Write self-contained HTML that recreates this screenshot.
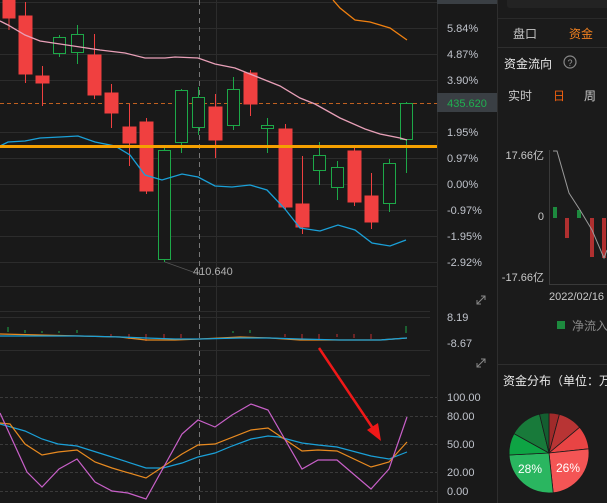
<!DOCTYPE html>
<html><head><meta charset="utf-8"><style>
html,body{margin:0;padding:0;background:#191919;width:607px;height:503px;overflow:hidden}
svg{display:block}
text{font-family:"Liberation Sans","Noto Sans CJK SC",sans-serif}
</style></head><body>
<svg width="607" height="503" viewBox="0 0 607 503" xmlns="http://www.w3.org/2000/svg">
<rect width="607" height="503" fill="#191919"/>
<!-- right panel -->
<rect x="497" y="0" width="110" height="503" fill="#1b1b1b"/>
<line x1="497.5" y1="0" x2="497.5" y2="503" stroke="#2e2e2e"/>
<rect x="507" y="-6" width="104" height="14" rx="3" fill="#232323"/>
<line x1="498" y1="18.5" x2="607" y2="18.5" stroke="#2a2a2a"/>
<line x1="498" y1="47.5" x2="607" y2="47.5" stroke="#2e2e2e"/>
<text x="513" y="38" font-size="12" fill="#c8c8c8">盘口</text>
<text x="569" y="38" font-size="12" fill="#f08020">资金</text>
<text x="504" y="68" font-size="12" fill="#e8e8e8">资金流向</text>
<circle cx="570" cy="62" r="6" fill="none" stroke="#888" stroke-width="1.2"/>
<text x="570" y="66" font-size="9" fill="#999" text-anchor="middle">?</text>
<text x="508" y="100" font-size="12" fill="#c8c8c8">实时</text>
<text x="553" y="100" font-size="12" fill="#f06010">日</text>
<text x="584" y="100" font-size="12" fill="#c8c8c8">周</text>
<text x="544" y="159" font-size="11" fill="#c8c8c8" text-anchor="end">17.66亿</text>
<text x="544" y="220" font-size="11" fill="#c8c8c8" text-anchor="end">0</text>
<text x="544" y="281" font-size="11" fill="#c8c8c8" text-anchor="end">-17.66亿</text>
<line x1="549.5" y1="150" x2="549.5" y2="284" stroke="#3a3a3a"/>
<line x1="549" y1="284.5" x2="607" y2="284.5" stroke="#3a3a3a"/>
<rect x="553" y="207" width="4" height="11" fill="#1d8a3e"/>
<rect x="565" y="218" width="4" height="20" fill="#b03030"/>
<rect x="577" y="210" width="4" height="8" fill="#1d8a3e"/>
<rect x="590" y="218" width="4" height="39" fill="#b03030"/>
<rect x="602" y="218" width="4" height="40" fill="#b03030"/>
<polyline points="553,151 557,151 569,193 580,210 592,230 604,258 607,250" fill="none" stroke="#9a9a9a" stroke-width="1"/>
<text x="549" y="300" font-size="11" fill="#c8c8c8">2022/02/16</text>
<rect x="557" y="321" width="8" height="8" fill="#1d8a3e"/>
<text x="572" y="330" font-size="12" fill="#888">净流入</text>
<line x1="498" y1="364.5" x2="607" y2="364.5" stroke="#2e2e2e"/>
<text x="503" y="385" font-size="12" fill="#e8e8e8">资金分布（单位：万</text>
<!-- pie -->
<g transform="translate(549,453)" stroke="#1b1b1b" stroke-width="0.8">
<path d="M0,0 L0,-40 A40,40 0 0,1 10.4,-38.6 Z" fill="#a02a2a"/>
<path d="M0,0 L10.4,-38.6 A40,40 0 0,1 30.6,-25.7 Z" fill="#b83434"/>
<path d="M0,0 L30.6,-25.7 A40,40 0 0,1 39.8,-4.2 Z" fill="#e84444"/>
<path d="M0,0 L39.8,-4.2 A40,40 0 0,1 4.2,39.8 Z" fill="#f45555"/>
<path d="M0,0 L4.2,39.8 A40,40 0 0,1 -39.9,2 Z" fill="#2ab660"/>
<path d="M0,0 L-39.9,2 A40,40 0 0,1 -35,-19.4 Z" fill="#0ea444"/>
<path d="M0,0 L-35,-19.4 A40,40 0 0,1 -9.5,-38.9 Z" fill="#187a3a"/>
<path d="M0,0 L-9.5,-38.9 A40,40 0 0,1 0,-40 Z" fill="#145e30"/>
</g>
<text x="568" y="472" font-size="12" fill="#fff" text-anchor="middle">26%</text>
<text x="530" y="473" font-size="12" fill="#fff" text-anchor="middle">28%</text>

<!-- main chart grid -->
<g stroke="#2c2c2c" stroke-width="1">
<line x1="0" y1="2.5" x2="437" y2="2.5"/><line x1="0" y1="28.5" x2="437" y2="28.5"/>
<line x1="0" y1="54.5" x2="437" y2="54.5"/><line x1="0" y1="80.5" x2="437" y2="80.5"/>
<line x1="0" y1="132.5" x2="437" y2="132.5"/><line x1="0" y1="158.5" x2="437" y2="158.5"/>
<line x1="0" y1="184.5" x2="437" y2="184.5"/><line x1="0" y1="210.5" x2="437" y2="210.5"/>
<line x1="0" y1="236.5" x2="437" y2="236.5"/><line x1="0" y1="262.5" x2="437" y2="262.5"/>
<line x1="0" y1="286.5" x2="437" y2="286.5"/>
<line x1="437.5" y1="0" x2="437.5" y2="503"/>
<line x1="216.5" y1="0" x2="216.5" y2="503"/>
<line x1="0" y1="311.5" x2="430" y2="311.5"/><line x1="0" y1="317.5" x2="430" y2="317.5"/>
<line x1="0" y1="350.5" x2="430" y2="350.5"/>
<line x1="0" y1="375.5" x2="430" y2="375.5"/>
</g>
<g stroke="#3a3a3a" stroke-dasharray="3,2">
<line x1="0" y1="397.5" x2="437" y2="397.5"/><line x1="0" y1="416.5" x2="437" y2="416.5"/>
<line x1="0" y1="444.5" x2="437" y2="444.5"/><line x1="0" y1="472.5" x2="437" y2="472.5"/>
<line x1="0" y1="491.5" x2="437" y2="491.5"/>
</g>
<line x1="199.5" y1="0" x2="199.5" y2="503" stroke="#777" stroke-dasharray="5,4"/>
<line x1="0" y1="103.5" x2="437" y2="103.5" stroke="#c06020" stroke-dasharray="4,3"/>

<!-- candles -->
<g stroke-width="1">
<g fill="#f04040" stroke="#f04040">
<line x1="9" y1="0" x2="9" y2="30"/><rect x="3" y="0" width="12" height="18"/>
<line x1="25.5" y1="2" x2="25.5" y2="83"/><rect x="19" y="16" width="13" height="58"/>
<line x1="42.5" y1="66" x2="42.5" y2="106"/><rect x="36" y="76" width="13" height="7"/>
<line x1="94.5" y1="34" x2="94.5" y2="99"/><rect x="88" y="55" width="13" height="40"/>
<line x1="111.5" y1="84" x2="111.5" y2="128"/><rect x="105" y="93" width="13" height="20"/>
<line x1="129.5" y1="104" x2="129.5" y2="166"/><rect x="123" y="127" width="13" height="16"/>
<line x1="146.5" y1="118" x2="146.5" y2="194"/><rect x="140" y="122" width="13" height="69"/>
<line x1="215.5" y1="94" x2="215.5" y2="158"/><rect x="209" y="107" width="13" height="33"/>
<line x1="250.5" y1="70" x2="250.5" y2="116"/><rect x="244" y="73" width="13" height="31"/>
<line x1="285.5" y1="124" x2="285.5" y2="210"/><rect x="279" y="129" width="13" height="78"/>
<line x1="302.5" y1="156" x2="302.5" y2="234"/><rect x="296" y="204" width="13" height="23"/>
<line x1="354.5" y1="148" x2="354.5" y2="206"/><rect x="348" y="151" width="13" height="51"/>
<line x1="371.5" y1="173" x2="371.5" y2="229"/><rect x="365" y="196" width="13" height="26"/>
</g>
<g fill="#191919" stroke="#1da848">
<line x1="59.5" y1="35" x2="59.5" y2="57"/><rect x="53.5" y="37.5" width="12" height="16"/>
<line x1="77.5" y1="25" x2="77.5" y2="64"/><rect x="71.5" y="34.5" width="12" height="18"/>
<line x1="164.5" y1="147" x2="164.5" y2="262"/><rect x="158.5" y="150.5" width="12" height="109"/>
<line x1="181.5" y1="89" x2="181.5" y2="153"/><rect x="175.5" y="90.5" width="12" height="52"/>
<line x1="198.5" y1="87" x2="198.5" y2="135"/><rect x="192.5" y="97.5" width="12" height="30"/>
<line x1="233.5" y1="77" x2="233.5" y2="130"/><rect x="227.5" y="89.5" width="12" height="36"/>
<line x1="267.5" y1="118" x2="267.5" y2="153"/><rect x="261.5" y="125.5" width="12" height="3"/>
<line x1="319.5" y1="142" x2="319.5" y2="185"/><rect x="313.5" y="155.5" width="12" height="15"/>
<line x1="337.5" y1="161" x2="337.5" y2="200"/><rect x="331.5" y="167.5" width="12" height="20"/>
<line x1="389.5" y1="159" x2="389.5" y2="212"/><rect x="383.5" y="163.5" width="12" height="40"/>
<line x1="406.5" y1="102" x2="406.5" y2="173"/><rect x="400.5" y="103.5" width="12" height="36"/>
</g>
</g>
<polyline points="0,21 8,25 25,35 40,41 60,44 80,47 100,50 125,53 145,58 165,58 175,57 198,58 215,64 235,68 260,78 280,86 300,98 315,104 340,118 365,129 380,134 400,138 407,140" fill="none" stroke="#e8a0b8" stroke-width="1.3"/>
<polyline points="0,146 8,142 25,141 40,138 60,137 78,136 95,142 115,146 130,155 145,175 162,180 182,174 198,177 215,186 232,187 250,185 267,190 285,209 300,228 320,231 338,225 355,230 372,243 390,246 406,240" fill="none" stroke="#1aa0d8" stroke-width="1.3"/>
<polyline points="333,0 340,8 355,20 370,22 390,28 407,40" fill="none" stroke="#f08010" stroke-width="1.3"/>
<line x1="0" y1="146.5" x2="437" y2="146.5" stroke="#f5a000" stroke-width="3"/>
<line x1="165" y1="262" x2="193" y2="272" stroke="#555" stroke-width="0.8"/>
<text x="193" y="275" font-size="11" fill="#b0b0b0">410.640</text>

<!-- right axis -->
<rect x="437" y="-8" width="60" height="12" fill="#3a3f44"/>
<g font-size="11" fill="#c0c4cc">
<text x="447" y="32">5.84%</text><text x="447" y="58">4.87%</text><text x="447" y="84">3.90%</text>
<text x="447" y="136">1.95%</text><text x="447" y="162">0.97%</text><text x="447" y="188">0.00%</text>
<text x="447" y="214">-0.97%</text><text x="447" y="240">-1.95%</text><text x="447" y="266">-2.92%</text>
<text x="447" y="321">8.19</text><text x="447" y="347">-8.67</text>
<text x="447" y="401">100.00</text><text x="447" y="420">80.00</text><text x="447" y="448">50.00</text>
<text x="447" y="476">20.00</text><text x="447" y="495">0.00</text>
</g>
<rect x="437" y="93" width="60" height="19" fill="#3a3f44"/>
<text x="467" y="107" font-size="11" fill="#20b050" text-anchor="middle">435.620</text>
<g stroke="#888" stroke-width="1" fill="none">
<path d="M477,304 L485,296 M481,296 L485,296 L485,300 M477,300 L477,304 L481,304"/>
<path d="M477,367 L485,359 M481,359 L485,359 L485,363 M477,363 L477,367 L481,367"/>
</g>

<!-- sub chart 2 -->
<g stroke-width="1">
<g stroke="#1da848"><line x1="8" y1="327" x2="8" y2="332"/><line x1="25" y1="330" x2="25" y2="333"/><line x1="42" y1="331" x2="42" y2="333"/><line x1="59" y1="331" x2="59" y2="333"/><line x1="77" y1="330" x2="77" y2="333"/><line x1="250" y1="330" x2="250" y2="333"/><line x1="233" y1="331" x2="233" y2="333"/><line x1="406" y1="326" x2="406" y2="333"/></g>
<g stroke="#c03030"><line x1="111" y1="334" x2="111" y2="337"/><line x1="129" y1="334" x2="129" y2="339"/><line x1="146" y1="334" x2="146" y2="341"/><line x1="164" y1="334" x2="164" y2="339"/><line x1="181" y1="334" x2="181" y2="338"/><line x1="285" y1="334" x2="285" y2="337"/><line x1="302" y1="334" x2="302" y2="340"/><line x1="319" y1="334" x2="319" y2="339"/><line x1="337" y1="334" x2="337" y2="337"/><line x1="354" y1="334" x2="354" y2="338"/><line x1="371" y1="334" x2="371" y2="339"/></g>
</g>
<polyline points="0,334 40,335 80,336 120,337 146,340 175,340 200,339 240,337 270,338 300,340 340,340 380,340 407,338" fill="none" stroke="#e88a20" stroke-width="1.3"/>
<polyline points="0,336 40,336 80,336 120,337 146,338 175,339 200,339 240,338 270,338 300,339 340,340 380,340 407,338" fill="none" stroke="#1aa0d8" stroke-width="1.3"/>

<!-- sub chart 3 -->
<polyline points="0,424 25,431 42,439 58,444 77,446 112,457 146,468 163,468 182,463 198,457 215,453 232,446 251,439 268,436 279,437 302,443 318,445 337,447 371,456 389,459 407,452" fill="none" stroke="#1aa0d8" stroke-width="1.2"/>
<polyline points="0,423 10,424 25,444 42,455 58,452 77,450 95,462 112,468 146,478 182,454 198,445 215,444 251,430 268,428 302,451 318,450 337,451 371,467 389,462 407,442" fill="none" stroke="#e88a20" stroke-width="1.2"/>
<polyline points="0,413 27,472 42,487 59,469 77,459 95,482 112,491 128,493 146,499 182,434 198,420 215,427 232,415 251,404 268,410 302,469 318,460 337,460 371,489 389,469 407,417" fill="none" stroke="#c860c8" stroke-width="1.2"/>
<!-- red arrow -->
<line x1="319" y1="348" x2="374" y2="430" stroke="#f01818" stroke-width="2.5"/>
<polygon points="381,441 367,430 378,423" fill="#f01818"/>
</svg>
</body></html>
